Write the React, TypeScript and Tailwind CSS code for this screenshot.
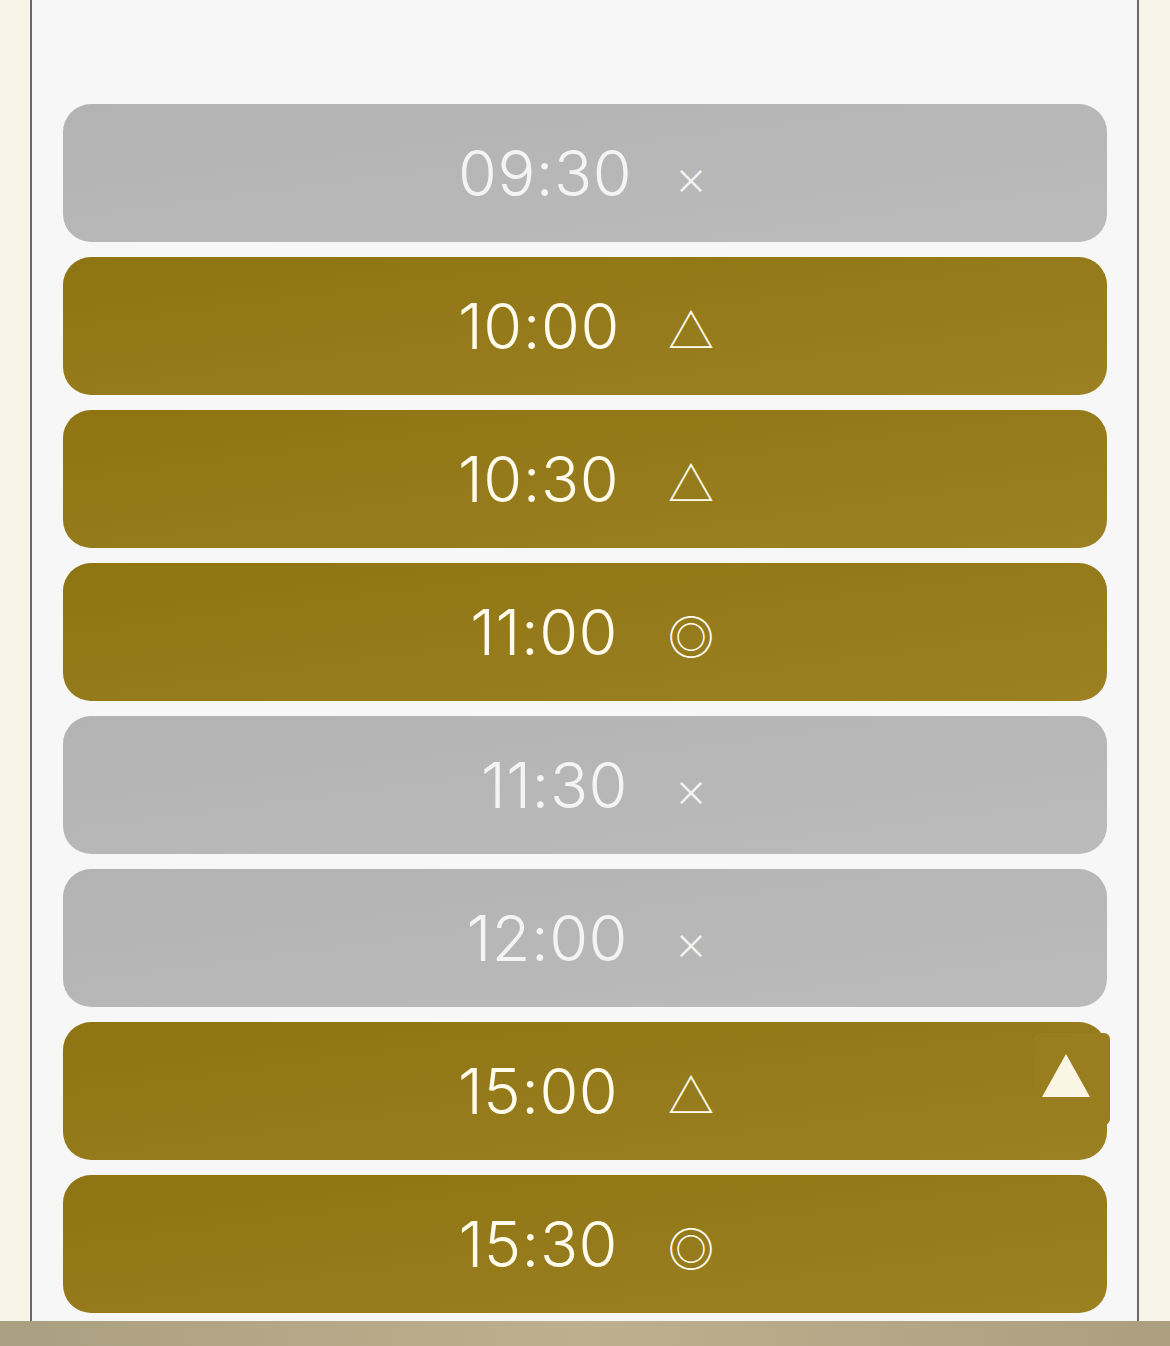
import React from "react";

type Slot = { time: string; mark: string; open: boolean };

const slots: Slot[] = [
  { time: "09:30", mark: "×", open: false },
  { time: "10:00", mark: "△", open: true },
  { time: "10:30", mark: "△", open: true },
  { time: "11:00", mark: "◎", open: true },
  { time: "11:30", mark: "×", open: false },
  { time: "12:00", mark: "×", open: false },
  { time: "15:00", mark: "△", open: true },
  { time: "15:30", mark: "◎", open: true },
];

function Row({ s }: { s: Slot }) {
  return (
    <div
      className={
        "h-[138px] rounded-[28px] flex items-center justify-center " +
        (s.open
          ? "bg-gradient-to-br from-[#8f7412] to-[#9b8122] text-[#fffcee]"
          : "bg-gradient-to-br from-[#b3b3b3] to-[#bbbbbb] text-[#f4f4f4]")
      }
    >
      <div className="flex items-center gap-[42px]">
        <span
          className={
            "w-[170px] text-right text-[63px] font-light leading-none tracking-[0.5px] " +
            (s.open ? "pr-[10px]" : "")
          }
          style={{ fontFamily: "Inter, 'Noto Sans CJK JP', sans-serif" }}
        >
          {s.time}
        </span>
        <span
          className={
            "w-[42px] flex justify-center leading-none " +
            (s.mark === "×" ? "text-[34px] pt-[14px]" : "text-[46px] pt-[4px]")
          }
          style={{ fontFamily: "'Noto Sans CJK JP', sans-serif" }}
        >
          {s.mark}
        </span>
      </div>
    </div>
  );
}

export default function App() {
  return (
    <div className="relative w-[1170px] h-[1346px] overflow-hidden bg-[#f8f5e8] flex">
      <div className="w-[30px] shrink-0" />
      <div className="w-[1109px] shrink-0 h-full bg-[#f7f7f7] border-l-2 border-r-2 border-[#6a6a6a] pl-[31px] pr-[30px] pt-[104px]">
        <div className="flex flex-col gap-[15px]">
          {slots.map((s) => (
            <Row key={s.time} s={s} />
          ))}
        </div>
      </div>
      <div className="flex-1" />

      <div className="absolute left-[1034px] top-[1033px] w-[76px] h-[92px] rounded-[6px] bg-[#987e1e] flex items-center justify-center">
        <svg width="50" height="45" viewBox="0 0 50 45" className="mb-[8px] mr-[12px]">
          <polygon points="25,1 49,44 1,44" fill="#fbf6e4" />
        </svg>
      </div>

      <div className="absolute left-0 bottom-0 w-full h-[25px] bg-gradient-to-r from-[#aa9f80] via-[#bdb08e] to-[#ab9f80]" />
    </div>
  );
}
